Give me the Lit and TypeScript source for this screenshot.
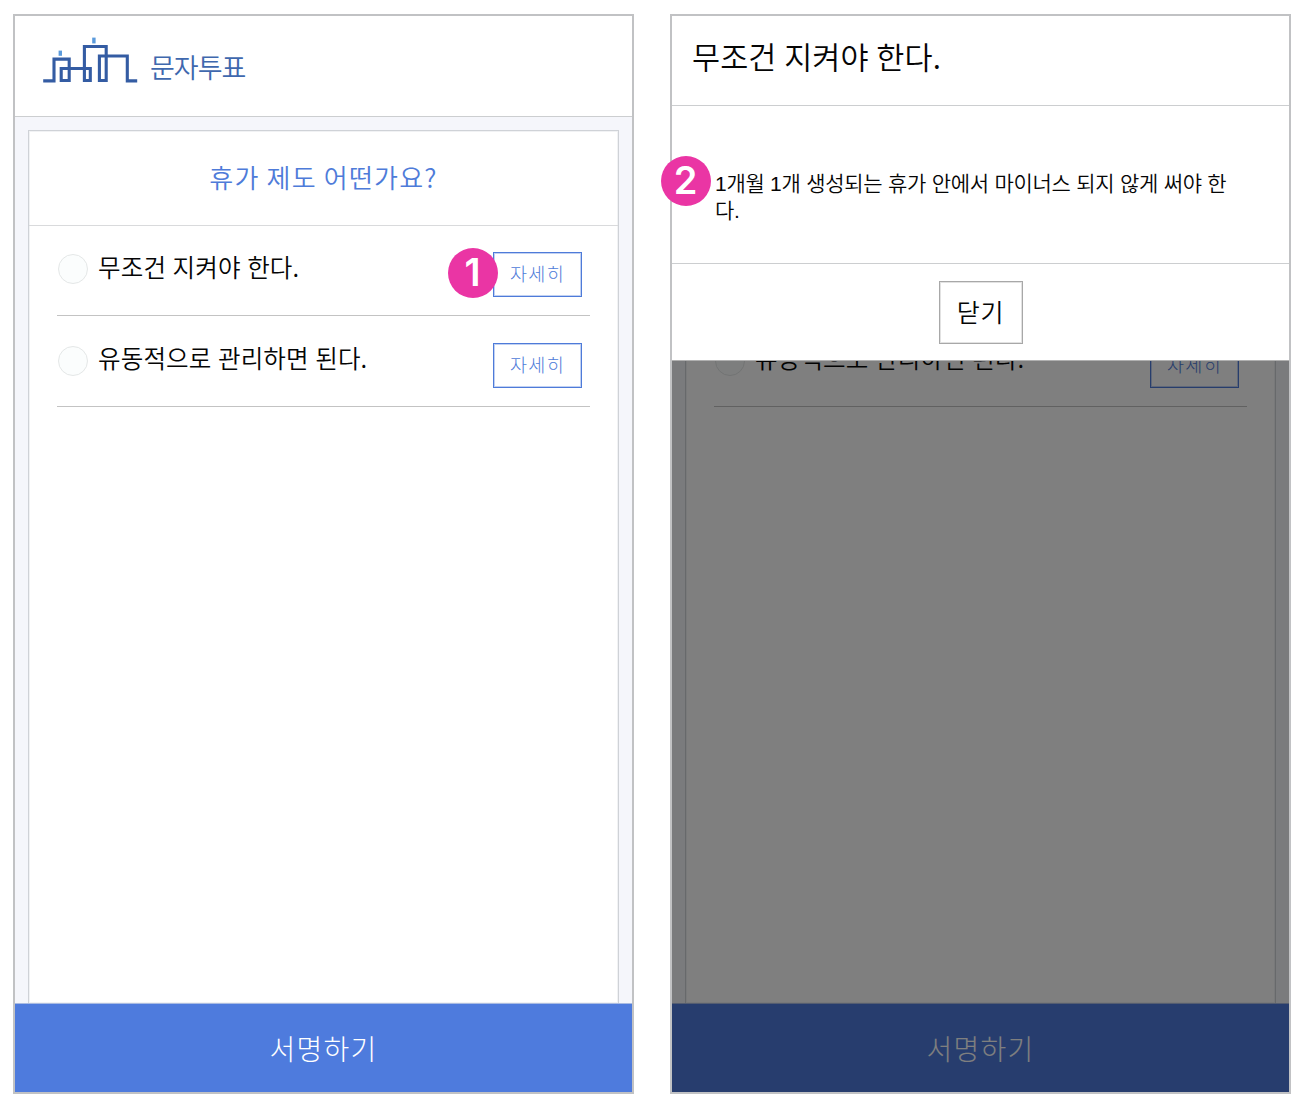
import { LitElement, html, css, svg } from "lit"
import { customElement, property } from "lit/decorators.js"

/**
 * vote-logo - skyline mark drawn with one continuous line
 */
@customElement("vote-logo")
export class VoteLogo extends LitElement {
  static styles = css`
    :host {
      display: block;
      width: 96px;
      height: 48px;
    }

    svg {
      display: block;
    }

    .line {
      fill: none;
      stroke: #345ca3;
      stroke-width: 3.1;
    }

    .antenna {
      fill: #5b9bdc;
    }
  `

  render() {
    return html`
      <svg width="96" height="48" viewBox="0 0 96 48">
        ${svg`
          <rect class="antenna" x="15.6" y="14.6" width="3.4" height="5.2" />
          <rect class="antenna" x="49.2" y="1.6" width="3.4" height="5.8" />
          <path
            class="line"
            d="M.2 44.9H11V23.1H26.2V44.5H18.2V32.5H47.3V44.5H41.4V10.5H63.2V44.5H56.4V20H84.3V44.9H94.2"
          />
        `}
      </svg>
    `
  }
}

/**
 * step-badge - numbered marker
 */
@customElement("step-badge")
export class StepBadge extends LitElement {
  static styles = css`
    :host {
      display: flex;
      align-items: center;
      justify-content: center;
      box-sizing: border-box;
      width: 50px;
      height: 50px;
      padding: 0 1px 2px 0;
      border-radius: 50%;
      background-color: #ea35a4;
      color: white;
      font: 600 38px/48px Inter, sans-serif;
    }
  `

  @property({ type: Number })
  step = 1

  render() {
    return html`${this.step}`
  }
}

/**
 * vote-screen - one phone screen with the poll
 */
@customElement("vote-screen")
export class VoteScreen extends LitElement {
  static styles = css`
    :host {
      display: block;
      position: relative;
      box-sizing: border-box;
      width: 621px;
      height: 1080px;
      border: 2px solid #c1c2c4;
    }

    .screen {
      display: flex;
      flex-direction: column;
      height: 100%;
      background-color: #f5f6fb;
    }

    .header {
      display: flex;
      box-sizing: border-box;
      height: 101px;
      padding: 20px 28px 0;
      border-bottom: 1px solid #ccced0;
      background-color: white;
    }

    .brand {
      margin: 11px 0 0 11px;
      color: #3f68ae;
      font-size: 27px;
      font-weight: 350;
      line-height: 40px;
      letter-spacing: -1px;
    }

    .card {
      flex: 1;
      margin: 13px 13px 0;
      border: 1px solid #cfd2d7;
      border-bottom: none;
      background-color: white;
      box-shadow: inset 0 0 0 1px #f1f2f4;
    }

    .question {
      height: 94px;
      border-bottom: 1px solid #d9dadc;
      color: #4e7bd9;
      font-size: 26px;
      font-weight: 350;
      line-height: 92px;
      letter-spacing: 1.2px;
      text-align: center;
    }

    /* covered by the modal */
    :host([open]) .brand,
    :host([open]) .question,
    :host([open]) .option:first-of-type {
      visibility: hidden;
    }

    .option {
      display: flex;
      position: relative;
      box-sizing: border-box;
      margin: 0 28px;
      height: 91px;
      padding: 27px 8px 0 1px;
      border-bottom: 1px solid #c3c3c3;
    }

    .option:first-of-type {
      height: 90px;
      padding-top: 26px;
    }

    .radio {
      box-sizing: border-box;
      width: 30px;
      height: 30px;
      margin-top: 3px;
      border: 1px solid #e4e7e7;
      border-radius: 50%;
      background-color: #fbfdfd;
    }

    .option:first-of-type .radio {
      margin-top: 2px;
    }

    .label {
      flex: 1;
      margin: -5px 0 0 10px;
      font-size: 24.5px;
      line-height: 40px;
      font-weight: 350;
      letter-spacing: 0.15px;
      word-spacing: 0.9px;
    }

    .detail {
      box-sizing: border-box;
      width: 89px;
      height: 45px;
      border: 1px solid #4e7bd9;
      box-shadow: inset 0 0 0 1px rgba(78, 123, 217, 0.35);
      color: #4e7bd9;
      font-size: 18.5px;
      font-weight: 300;
      line-height: 40px;
      letter-spacing: 1.3px;
      text-align: center;
    }

    .sign {
      height: 88px;
      border-top: 1px solid #a9bbe2;
      background-color: #4e7bdd;
      color: white;
      font-size: 28px;
      font-weight: 300;
      line-height: 88px;
      letter-spacing: 1.2px;
      text-align: center;
    }

    .marker {
      position: absolute;
      left: 391px;
      top: 22px;
    }

    .overlay {
      position: absolute;
      inset: 0;
      background-color: rgba(0, 0, 0, 0.5);
    }

    .modal {
      height: 344px;
      border-bottom: 1px solid #b0b0b0;
      background-color: white;
    }

    .modal-title {
      height: 89px;
      padding-left: 20px;
      border-bottom: 1px solid #ccced0;
      font-size: 30.5px;
      font-weight: 350;
      line-height: 81px;
      letter-spacing: 0.1px;
      word-spacing: 0.8px;
    }

    .modal-body {
      box-sizing: border-box;
      height: 158px;
      padding: 64px 43px 0;
      border-bottom: 1px solid #ccced0;
      font-family: "Liberation Sans", "Noto Sans CJK KR", sans-serif;
      font-size: 21px;
      font-weight: 350;
      line-height: 27px;
      letter-spacing: -0.26px;
      word-break: break-all;
    }

    .modal-marker {
      position: absolute;
      left: -11px;
      top: 140px;
    }

    .close {
      box-sizing: border-box;
      width: 84px;
      height: 63px;
      margin: 17px auto 0;
      border: 1px solid #a8a8a8;
      box-shadow: inset 0 0 0 1px #e2e2e2;
      font-size: 25px;
      font-weight: 350;
      line-height: 58px;
      letter-spacing: 0.8px;
      text-align: center;
    }
  `

  /**
   * Whether the detail modal is open
   */
  @property({ type: Boolean })
  open = false

  options = ["무조건 지켜야 한다.", "유동적으로 관리하면 된다."]

  render() {
    return html`
      <div class="screen">
        <header class="header">
          <vote-logo></vote-logo>
          <div class="brand">문자투표</div>
        </header>
        <main class="card">
          <header class="question">휴가 제도 어떤가요?</header>
          ${this.options.map(
            (option, i) => html`
              <div class="option">
                <span class="radio"></span>
                <span class="label">${option}</span>
                <span class="detail">자세히</span>
                ${i === 0 && !this.open
                  ? html`<step-badge class="marker" .step=${1}></step-badge>`
                  : ""}
              </div>
            `
          )}
        </main>
        <footer class="sign">서명하기</footer>
      </div>
      ${this.open
        ? html`
            <div class="overlay">
              <div class="modal">
                <div class="modal-title">무조건 지켜야 한다.</div>
                <div class="modal-body">
                  1개월 1개 생성되는 휴가 안에서 마이너스 되지 않게 써야 한다.
                </div>
                <div class="close">닫기</div>
              </div>
              <step-badge class="modal-marker" .step=${2}></step-badge>
            </div>
          `
        : ""}
    `
  }
}

@customElement("app-root")
export class AppRoot extends LitElement {
  static styles = css`
    :host {
      display: flex;
      gap: 36px;
      box-sizing: border-box;
      height: 1112px;
      padding: 14px 0 0 13px;
      background-color: white;
      color: #050505;
      font-family: "Noto Sans CJK KR", sans-serif;
    }
  `

  render() {
    return html`
      <vote-screen></vote-screen>
      <vote-screen open></vote-screen>
    `
  }
}
